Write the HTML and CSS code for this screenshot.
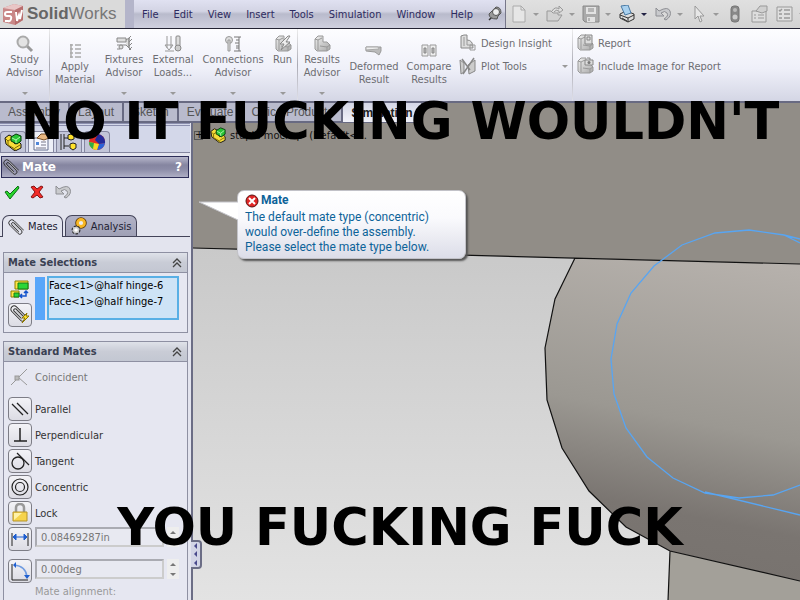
FILE: index.html
```html
<!DOCTYPE html>
<html lang="en">
<head>
<meta charset="utf-8">
<title>SolidWorks</title>
<link rel="stylesheet" href="styles.css">
</head>
<body>
<svg class="defs" aria-hidden="true">
  <defs>
    <linearGradient id="silver" x1="0" y1="0" x2="1" y2="1"><stop offset="0" stop-color="#eee"/><stop offset="1" stop-color="#aaa"/></linearGradient>
    <symbol id="part" viewBox="0 0 18 18">
      <path d="M1 5l4-3 4 2v4l2 3 4-2 2 2v4l-6 3-9-7z" fill="#f7dc3a" stroke="#111"/>
      <path d="M2 6l2 2v4l7 4v1M4 8l3-2M11 15l5-3" fill="none" stroke="#806a00"/>
      <path d="M7 4l5-3 5 2v5l-4 3-6-3z" fill="#28c435" stroke="#053d09"/>
      <path d="M8 5l4 2 4-3M12 7v3" fill="none" stroke="#b6f7b0"/>
    </symbol>
    <symbol id="clip" viewBox="0 0 18 18">
      <g transform="rotate(45 9 9)" fill="none" stroke="#2b2b2b">
        <path d="M18 5.500H2.500a3.500 3.500 0 000 7H16a2.500 2.500 0 000-5H4a1.500 1.500 0 000 3h11"/>
        <path d="M17 6.500H3M16 11.500H3M14 8.500H5" stroke="#aaa"/>
      </g>
    </symbol>
    <symbol id="block" viewBox="0 0 18 18">
      <path d="M2 4l3-3h5v6h4l3 3v4l-3 2H4l-2-2z" fill="url(#silver)" stroke="#999"/>
      <path d="M2 4l3 1v10M5 5l4-2M7 11l7 1v4M14 12l3-2" fill="none" stroke="#999"/>
    </symbol>
    <symbol id="undo" viewBox="0 0 18 16">
      <path d="M2 2v8h8L7 7q4-3 6 0t-3 6l2 1q6-4 4-9T5 5z" fill="#c9cacd" stroke="#8e8f94"/>
    </symbol>
    <symbol id="chev" viewBox="0 0 10 10">
      <path d="M1 5l4-4 4 4M1 9l4-4 4 4" fill="none" stroke="#444" stroke-width="1.3"/>
    </symbol>
  </defs>
</svg>

<header class="topbar">
  <div class="brand">
    <svg width="22" height="24" viewBox="0 0 22 24" aria-hidden="true">
      <path d="M1 6l11-4 9 2v14l-8 5L1 20z" fill="#c98787"/>
      <path d="M1 6l11-4 9 2-8 4z" fill="#e9c6c6"/>
      <path d="M13 8l8-4v14l-8 5z" fill="#b86d6d"/>
      <path d="M10 10H5q-2 0-2 2t2 2h2q3 0 2 3t-3 2H3M14 10l1 9 2-6 1 4 2-9" fill="none" stroke="#fff" stroke-width="2"/>
    </svg>
    <span class="brand-name"><b>Solid</b>Works</span>
  </div>
  <nav class="menu" aria-label="Main menu">
    <button>File</button><button>Edit</button><button>View</button><button>Insert</button><button>Tools</button><button>Simulation</button><button>Window</button><button>Help</button>
    <button class="pin" aria-label="Pin menu"><svg width="14" height="16" viewBox="0 0 14 16"><path d="M1 14l4-4" stroke="#333" stroke-width="1.5"/><path d="M1 8q0 5 8 5l1-3 3-3q0-6-5-6L5 4z" fill="#999" stroke="#555"/><circle cx="8" cy="6" r="3.500" fill="#eee" stroke="#555"/></svg></button>
  </nav>
  <div class="quick" role="toolbar" aria-label="Standard">
    <button aria-label="New"><svg width="18" height="18" viewBox="0 0 18 18"><path d="M3 1h8l4 4v12H3z" fill="#e6e6e6" stroke="#aaa"/><path d="M11 1v4h4" fill="none" stroke="#aaa"/></svg><i class="drop"></i></button>
    <button aria-label="Open"><svg width="18" height="18" viewBox="0 0 18 18"><path d="M1 16V6h4l2 2h5v2h4l-4 6z" fill="#d2d2d2" stroke="#999"/><path d="M6 6q3-5 7-2V1l4 4-4 3V6q-3-2-5 1" fill="#ddd" stroke="#999"/></svg><i class="drop"></i></button>
    <button aria-label="Save"><svg width="18" height="18" viewBox="0 0 18 18"><path d="M1 1h16v16H3l-2-2z" fill="#aaa" stroke="#888"/><path d="M4 2h10v7H4zM5 12h8v5H5z" fill="#e2e2e2"/><path d="M6 4h6M6 6h6M7 13v3" stroke="#888"/></svg><i class="drop"></i></button>
    <button aria-label="Print"><svg width="18" height="18" viewBox="0 0 18 18"><path d="M2 9l6-3 8 3v5l-6 3-8-4z" fill="#ddd" stroke="#333"/><path d="M3 1l7-1 3 8-6 2z" fill="#a9d1ef" stroke="#4b7ba5"/><path d="M2 10l8 3 6-3M10 13v4M4 13l5 3" fill="none" stroke="#333"/></svg><i class="drop dark"></i></button>
    <button aria-label="Undo"><svg width="18" height="18"><use href="#undo"/></svg><i class="drop"></i></button>
    <button aria-label="Select"><svg width="18" height="18" viewBox="0 0 18 18"><path d="M5 1v13l3-3 2 6 2-1-2-5h4z" fill="#e7e7e7" stroke="#999"/></svg><i class="drop"></i></button>
    <button aria-label="Rebuild"><svg width="18" height="18" viewBox="0 0 18 18"><rect x="5" y="1" width="8" height="16" rx="3" fill="#888" stroke="#777"/><circle cx="9" cy="5" r="2" fill="#bbb"/><circle cx="9" cy="12" r="2.500" fill="#ccc"/></svg></button>
    <button aria-label="File properties"><svg width="18" height="18" viewBox="0 0 18 18"><path d="M1 6h14v11H1z" fill="#ddd" stroke="#999"/><path d="M3 10h2m2 0h6M3 13h2m2 0h6" stroke="#999"/><path d="M5 6l4-5h7v5l-5 2z" fill="#d0d0d0" stroke="#999"/></svg></button>
    <button aria-label="Options"><svg width="18" height="18" viewBox="0 0 18 18"><path d="M1 2h15v14H1z" fill="#e0e0e0" stroke="#999"/><path d="M3 5l1 1 2-2M8 5h6M3 9h3M8 9h6M3 13h3M8 13h6" fill="none" stroke="#999" stroke-width="1.500"/></svg><i class="drop"></i></button>
  </div>
</header>

<section class="ribbon" aria-label="Simulation commands">
  <button class="cmd sep"><svg width="18" height="18" viewBox="0 0 18 18"><path d="M11 11l5 5" stroke="#999" stroke-width="3"/><circle cx="7" cy="7" r="5.500" fill="#e3e3e3" stroke="#aaa" stroke-width="2"/></svg><span>Study<br>Advisor</span><i class="drop"></i></button>
  <button class="cmd low"><svg width="18" height="18" viewBox="0 0 18 18"><path d="M5 2v14M4 3h3M4 7h3M4 11h3M4 15h3M9 3h6M9 7h6M9 11h6M9 15h6" stroke="#aaa" stroke-width="1.500"/></svg><span>Apply<br>Material</span></button>
  <button class="cmd"><svg width="18" height="18" viewBox="0 0 18 18"><path d="M2 3h9v4H2zM11 5l3-2v10l-3-3" fill="#ddd" stroke="#888"/><path d="M2 10h9M2 14h3M16 1l-2 2v10l2 2M17 4l-3 3M17 8l-3 3M17 12l-3 3" fill="none" stroke="#888"/><circle cx="6" cy="12" r="2" fill="#ddd" stroke="#888"/></svg><span>Fixtures<br>Advisor</span><i class="drop"></i></button>
  <button class="cmd"><svg width="18" height="18" viewBox="0 0 18 18"><path d="M3 1v12M7 1v12M1 10l4 5 4-5zM1 16h9" fill="none" stroke="#999"/><rect x="12" y="1" width="4" height="10" rx="1" fill="#ddd" stroke="#888"/><circle cx="14" cy="13" r="3" fill="#ccc" stroke="#888"/></svg><span>External<br>Loads...</span><i class="drop"></i></button>
  <button class="cmd"><svg width="18" height="18" viewBox="0 0 18 18"><circle cx="5" cy="5" r="3.500" fill="#ddd" stroke="#999"/><path d="M4 5v11h2V5z" fill="#ddd" stroke="#999"/><path d="M10 2h7M10 16h7M12 5h3M11 8h4M12 11h3M12 13h3M15 2v14" stroke="#777"/></svg><span>Connections<br>Advisor</span><i class="drop"></i></button>
  <button class="cmd sep"><svg width="18" height="18" viewBox="0 0 18 18"><use href="#block"/><path d="M14 1L6 9h4l-3 6 9-8h-4l4-6z" fill="#eee" stroke="#888"/></svg><span>Run</span><i class="drop"></i></button>
  <button class="cmd"><svg width="18" height="18"><use href="#block"/></svg><span>Results<br>Advisor</span><i class="drop"></i></button>
  <button class="cmd low"><svg width="18" height="18" viewBox="0 0 18 18"><path d="M1 5h15v4l-2 4-4-3-9-1z" fill="#bbb" stroke="#999"/><path d="M1 5h12l1 2-13 1z" fill="#eee" stroke="#aaa"/></svg><span>Deformed<br>Result</span></button>
  <button class="cmd low"><svg width="18" height="18" viewBox="0 0 18 18"><path d="M2 3h6v11H2zM10 3h6v11h-6z" fill="#eee" stroke="#999"/><path d="M4 6h2v5H4zM12 6h2v5h-2z" fill="#bbb" stroke="#888"/></svg><span>Compare<br>Results</span></button>
  <div class="stack sep">
    <button class="row-cmd"><svg width="18" height="18" viewBox="0 0 18 18"><path d="M2 2l3-1h3v5q6 0 6 8H2z" fill="#ddd" stroke="#888"/><path d="M5 3v9M8 6v5h5M11 11h5v5h-5z" fill="none" stroke="#999"/></svg><span>Design Insight</span></button>
    <button class="row-cmd"><svg width="18" height="18" viewBox="0 0 18 18"><path d="M1 3l4 3v9l-3 2zM9 8l7-5v11l-6 3z" fill="#ccc" stroke="#888"/><path d="M3 2l8 11M15 1L6 14l-2 3" fill="none" stroke="#888" stroke-width="1.500"/></svg><span>Plot Tools</span><i class="drop"></i></button>
  </div>
  <div class="stack">
    <button class="row-cmd"><svg width="18" height="18" viewBox="0 0 18 18"><use href="#block"/><path d="M9 1h7v9H9z" fill="#ddd" stroke="#888"/><path d="M11 3h3v3h-3z" fill="none" stroke="#888"/></svg><span>Report</span></button>
    <button class="row-cmd"><svg width="18" height="18" viewBox="0 0 18 18"><use href="#block"/><path d="M9 3h8v5H9zM11 1h3v2" fill="#ddd" stroke="#888"/><circle cx="13" cy="5.500" r="1.500" fill="#777"/></svg><span>Include Image for Report</span></button>
  </div>
</section>

<nav class="tabs" aria-label="Command tabs">
  <button>Assembly</button><button>Layout</button><button>Sketch</button><button>Evaluate</button><button>Office Products</button><button class="active">Simulation</button>
</nav>

<main class="work">
  <aside class="panel">
    <div class="panel-tabs">
      <button aria-label="Feature tree"><svg width="18" height="18"><use href="#part"/></svg></button>
      <button class="active" aria-label="Properties"><svg width="18" height="18" viewBox="0 0 18 18"><path d="M2 5h14v12H2z" fill="#f7f8ff" stroke="#66718f"/><path d="M4 9h3v3H4z" fill="#4f86d8"/><path d="M9 9h5M9 12h5M4 15h10" stroke="#778"/><path d="M5 5l4-4h5l3 4-5 2z" fill="#e8b782" stroke="#774d25"/></svg></button>
      <button aria-label="Configurations"><svg width="18" height="18" viewBox="0 0 18 18"><path d="M1 1v16M4 1v15M4 5h4M4 13h5" fill="none" stroke="#222"/><path d="M8 2l3-1 3 1v4l-3 1-3-1zM10 11l3-1 3 1v4l-3 2-3-2z" fill="#ffe22b" stroke="#222"/></svg></button>
      <button aria-label="Display"><svg width="18" height="18" viewBox="0 0 18 18"><circle cx="9" cy="9" r="8" fill="#e52b25"/><path d="M10 1a8 8 0 017 9l-6 1-4-4z" fill="#242a9a"/><path d="M17 10a8 8 0 01-8 7l2-6z" fill="#2b62d8"/><path d="M1 9l10 2-2 6a8 8 0 01-8-8z" fill="#f5d927"/><path d="M1 9a8 8 0 004 7l1-6z" fill="#30ad45"/></svg></button>
    </div>
    <h1 class="title"><svg width="16" height="18"><use href="#clip"/></svg><span>Mate</span><button aria-label="Help">?</button></h1>
    <div class="confirm">
      <button aria-label="OK"><svg width="16" height="16" viewBox="0 0 16 16"><path d="M1 8l2-1 3 3 8-8 1 2-9 11z" fill="#28d52c" stroke="#0c6c15"/></svg></button>
      <button aria-label="Cancel"><svg width="16" height="16" viewBox="0 0 16 16"><path d="M2 3l3-1 3 3 4-3 2 1-4 5 4 5-3 1-3-3-4 3-2-1 4-5z" fill="#f22b27" stroke="#851313"/></svg></button>
      <button aria-label="Undo"><svg width="18" height="16"><use href="#undo"/></svg></button>
    </div>
    <div class="mode-tabs">
      <button class="active"><svg width="16" height="18"><use href="#clip"/></svg>Mates</button>
      <button><svg width="16" height="18" viewBox="0 0 16 18"><circle cx="10" cy="6" r="3.500" fill="#fff" stroke="#5d3800" stroke-width="4.500"/><circle cx="10" cy="6" r="3.500" fill="#eee" stroke="#f9b824" stroke-width="2.800"/><circle cx="5" cy="13" r="3" fill="#fff" stroke="#333" stroke-width="3" stroke-dasharray="2 1"/><circle cx="5" cy="13" r="2.500" fill="#fff" stroke="#ccc" stroke-width="1.500"/></svg>Analysis</button>
    </div>
    <section class="group">
      <h2>Mate Selections<svg width="10" height="10"><use href="#chev"/></svg></h2>
      <div class="selections">
        <div class="sel-icons">
          <svg width="20" height="20" viewBox="0 0 20 20"><path d="M5 2h13v8H5z" fill="#ffe547" stroke="#8e7f00"/><path d="M8 4h10v6H8z" fill="#2bd638" stroke="#127a17"/><path d="M1 12h8v6H1z" fill="#ffe547" stroke="#8e7f00"/><path d="M4 14h5v4H4z" fill="#2bd638" stroke="#127a17"/><path d="M10 17h6v-4M12 15l-2 2 2 2M14 14l2-2 2 2" fill="none" stroke="#1454cc" stroke-width="1.500"/></svg>
          <button class="tool" aria-label="Multiple mate mode"><svg width="20" height="20" viewBox="0 0 20 20"><use href="#clip" width="17" height="17"/><path d="M17 8l-5 5h3l-3 5 7-7h-3z" fill="#ffe32c" stroke="#8c7600"/></svg></button>
        </div>
        <span class="swatch"></span>
        <ul class="faces"><li>Face&lt;1&gt;@half hinge-6</li><li>Face&lt;1&gt;@half hinge-7</li></ul>
      </div>
    </section>
    <section class="group">
      <h2>Standard Mates<svg width="10" height="10"><use href="#chev"/></svg></h2>
      <div class="mates">
        <button class="mate off"><span class="plain"><svg width="20" height="20" viewBox="0 0 20 20"><path d="M1 18L17 2M8 10l9 8" stroke="#999"/><rect x="5" y="9" width="4" height="4" fill="#bbb" stroke="#999"/></svg></span>Coincident</button>
        <button class="mate"><span class="tool"><svg width="20" height="20" viewBox="0 0 20 20"><path d="M2 5l11 11M7 4l11 11" stroke="#222" stroke-width="1.300"/></svg></span>Parallel</button>
        <button class="mate"><span class="tool"><svg width="20" height="20" viewBox="0 0 20 20"><path d="M10 3v13M4 16h13" stroke="#222" stroke-width="1.500"/></svg></span>Perpendicular</button>
        <button class="mate"><span class="tool"><svg width="20" height="20" viewBox="0 0 20 20"><circle cx="8" cy="12" r="6" fill="none" stroke="#222" stroke-width="1.300"/><path d="M7 2l12 12" stroke="#222" stroke-width="1.300"/></svg></span>Tangent</button>
        <button class="mate"><span class="tool"><svg width="20" height="20" viewBox="0 0 20 20"><circle cx="10" cy="10" r="8" fill="none" stroke="#222" stroke-width="1.200"/><circle cx="10" cy="10" r="4.500" fill="none" stroke="#222" stroke-width="1.200"/></svg></span>Concentric</button>
        <button class="mate"><span class="tool"><svg width="20" height="20" viewBox="0 0 20 20"><path d="M6 9V5q0-4 4-4t4 4v4" fill="none" stroke="#999" stroke-width="2.500"/><path d="M3 9h14v9H3z" fill="#f6d34c" stroke="#b69328"/><path d="M4 17V10h8z" fill="#fff2a8"/></svg></span>Lock</button>
        <div class="value"><button class="tool" aria-label="Distance mate"><svg width="20" height="20" viewBox="0 0 20 20"><path d="M2 4v13M18 4v13" stroke="#222"/><path d="M3 8h14M6 5L3 8l3 3zM14 5l3 3-3 3z" fill="#1f5fd0" stroke="#1f5fd0"/></svg></button><input aria-label="Distance" value="0.08469287in"><span class="spin"><i></i><i></i></span></div>
        <div class="value"><button class="tool" aria-label="Angle mate"><svg width="20" height="20" viewBox="0 0 20 20"><path d="M2 3v16h16" fill="none" stroke="#222"/><path d="M4 4q12 1 13 12" fill="none" stroke="#6f9be0" stroke-width="1.500"/><path d="M6 1L3 4l3 3zM14 14l3 4 3-4z" fill="#1f5fd0"/></svg></button><input aria-label="Angle" value="0.00deg"><span class="spin"><i></i><i></i></span></div>
        <p class="align">Mate alignment:</p>
      </div>
    </section>
    <button class="grip" aria-label="Collapse panel"><i></i><i></i><i></i></button>
  </aside>

  <section class="view" aria-label="Model view">
    <svg class="model" viewBox="193 122 607 478" preserveAspectRatio="xMinYMin slice" aria-hidden="true">
      <defs>
        <linearGradient id="sky" x1="0" y1="0" x2="0" y2="1"><stop offset="0" stop-color="#c9c9c9"/><stop offset="1" stop-color="#e3e3e3"/></linearGradient>
        <linearGradient id="cyl" gradientUnits="userSpaceOnUse" x1="735" y1="255" x2="675" y2="560"><stop offset="0" stop-color="#b6b1ac"/><stop offset=".55" stop-color="#9b9892"/><stop offset=".85" stop-color="#7a7571"/><stop offset="1" stop-color="#78736f"/></linearGradient>
      </defs>
      <path d="M193 122h607v142L193 247z" fill="#918d87"/>
      <path d="M193 247l607 16v337H193z" fill="url(#sky)"/>
      <path d="M670 550l130 30v20H668z" fill="#a3a099"/>
      <path d="M575 257l-20 41-10 49 2 52 15 48 27 43 37 36 44 24 130 30V263z" fill="url(#cyl)"/>
      <path d="M193 247l607 16M575 257l-20 41-10 49 2 52 15 48 27 43 37 36 44 24 130 30M670 550l-2 50" fill="none" stroke="#111" stroke-width="1.200"/>
      <path d="M800 238l-16-4-35-5-34 3-33 12-28 21-23 27-14 31-6 35 3 35 12 34 21 29 26 21 32 15 34 5 34-3 27-10M705 491l95 23M784 234l16 8" fill="none" stroke="#58a5f2" stroke-width="1.300"/>
    </svg>
    <div class="tree"><button aria-label="Expand">+</button><svg width="16" height="16"><use href="#part"/></svg><span>stupid mockup&nbsp; (Default&lt;...</span></div>
    <div class="balloon" role="alert">
      <svg class="tail" width="41" height="22" viewBox="0 0 41 22" aria-hidden="true"><path d="M40 1L1 1l39 18z" fill="#fff"/><path d="M40 1L1 1l39 18" fill="none" stroke="#c2c2c8"/></svg>
      <h3><svg width="14" height="14" viewBox="0 0 14 14" aria-hidden="true"><circle cx="7" cy="7" r="6" fill="#e02626" stroke="#5b1111"/><path d="M4 4l6 6M10 4l-6 6" stroke="#fff" stroke-width="2"/></svg>Mate</h3>
      <p>The default mate type (concentric)<br>would over-define the assembly.<br>Please select the mate type below.</p>
    </div>
  </section>
</main>

<p class="caption top">NO IT FUCKING WOULDN'T</p>
<p class="caption bottom">YOU FUCKING FUCK</p>
</body>
</html>
```
FILE: styles.css
```css
* { box-sizing: border-box; }

body {
  margin: 0;
  height: 100vh;
  display: flex;
  flex-direction: column;
  position: relative;
  overflow: hidden;
  background: #918d87;
  color: #333;
  font: 11px/13px "DejaVu Sans Condensed", "DejaVu Sans", sans-serif;
}

button {
  margin: 0;
  padding: 0;
  border: 0;
  background: none;
  color: inherit;
  font: inherit;
}

svg { display: block; flex: none; }
.defs { position: absolute; width: 0; height: 0; }

.drop {
  border: 3px solid transparent;
  border-top-color: #999;
  border-bottom: 0;
}
.drop.dark { border-top-color: #224; }

/* Title bar */
.topbar {
  display: flex;
  flex: none;
  height: 29px;
  border-bottom: 1px solid #223;
}
.brand {
  display: flex;
  align-items: center;
  gap: 3px;
  width: 125px;
  padding-left: 2px;
  background: #dadada;
}
.brand-name {
  color: #777;
  font: 17px/20px "Liberation Sans", sans-serif;
}
.brand-name b { color: #666; }
.menu {
  display: flex;
  align-items: center;
  gap: 15px;
  width: 381px;
  padding-left: 8px;
  border-left: 9px solid #b4b5ca;
  border-right: 1px solid #77778a;
  background: linear-gradient(#e0e1f1, #d3d4e4 40%, #b9bbcc 50%, #cfd0df);
  color: #2d2b60;
}
.quick {
  display: flex;
  flex: 1;
  align-items: center;
  gap: 7px;
  padding-left: 4px;
  overflow: hidden;
  background: linear-gradient(#e0e0e0, #d3d3d3);
}
.quick button {
  display: flex;
  flex: none;
  align-items: center;
  gap: 5px;
}

/* Ribbon */
.ribbon {
  display: grid;
  grid-template-columns: 50px 50px 48px 50px 70px 30px 48px 56px 54px 117px 1fr;
  flex: none;
  height: 74px;
  border-bottom: 2px solid #686a82;
  background: linear-gradient(#fdfdff, #eff0f9 55%, #d4d6e5);
  color: #6d6d72;
}
.sep {
  border-right: 1px solid;
  border-image: linear-gradient(#eee, #aaaab4 50%, #e2e2ea) 1;
}
.cmd {
  display: flex;
  flex-direction: column;
  align-items: center;
  padding: 6px 0;
  white-space: nowrap;
}
.cmd.low { padding-top: 13px; }
.cmd .drop { margin-top: auto; }
.stack {
  display: flex;
  flex-direction: column;
  gap: 5px;
  padding: 5px 4px 5px 3px;
}
.row-cmd {
  display: flex;
  align-items: center;
  gap: 4px;
  height: 18px;
  white-space: nowrap;
}
.row-cmd .drop { margin-left: auto; }

/* Command tabs */
.tabs {
  display: flex;
  flex: none;
  height: 20px;
}
.tabs button {
  padding: 0 8px;
  border-right: 2px solid #686a82;
  border-bottom: 2px solid #686a82;
  background: #b9bbcd;
  color: #555;
  font: 12px/16px "Liberation Sans", sans-serif;
}
.tabs .active {
  border-bottom-width: 1px;
  background: linear-gradient(#d4d6e5, #f2f3fa);
  color: #222;
  font-weight: bold;
}

.work {
  display: flex;
  flex: 1;
  min-height: 0;
}

/* Property panel */
.panel {
  position: relative;
  flex: none;
  width: 193px;
  padding-right: 1px;
  border-right: 2px solid #6b6d85;
  background: #e3e4ee;
}
.panel-tabs {
  display: flex;
  align-items: flex-end;
  gap: 2px;
  height: 30px;
  border-top: 3px double #8c8fae;
  border-bottom: 1px solid #8587a0;
  background: #d3d7e9;
}
.panel-tabs button {
  width: 26px;
  height: 21px;
  padding: 1px 3px;
  border: 1px solid #8587a0;
  border-bottom: 0;
  border-radius: 4px 4px 0 0;
  background: #c2c5d8;
}
.panel-tabs .active { background: #eef0f8; }
.title {
  display: flex;
  align-items: center;
  gap: 3px;
  height: 22px;
  margin: 3px 1px 0;
  padding: 0 6px 0 1px;
  border: 1px solid #2d2d58;
  background: linear-gradient(#b7b7cb, #8585a0 40%, #8b8ba6 60%, #aeaec4);
  color: #fff;
  font: bold 12px/18px "DejaVu Sans", sans-serif;
}
.title button { margin-left: auto; }
.confirm {
  display: flex;
  gap: 9px;
  padding: 6px 4px;
}
.mode-tabs {
  display: flex;
  gap: 2px;
  height: 27px;
  padding: 5px 2px 0;
  margin-top: 4px;
  border-bottom: 1px solid #444459;
  color: #223;
}
.mode-tabs button {
  display: flex;
  align-items: center;
  gap: 4px;
  padding: 0 4px 0 5px;
  border: 1px solid #444459;
  border-bottom: 0;
  border-radius: 7px 7px 0 0;
  background: linear-gradient(#b2b3c7, #9fa0b5);
}
.mode-tabs .active { background: #e3e4ee; margin-bottom: -1px; }
.group {
  margin: 8px 2px 0 3px;
  border: 1px solid #8e90a2;
  background: #e6e7f1;
}
.mode-tabs + .group { margin-top: 15px; }
.group h2 {
  display: flex;
  align-items: center;
  justify-content: space-between;
  height: 20px;
  margin: 0;
  padding: 0 5px 0 4px;
  border-bottom: 1px solid #8e90a2;
  background: linear-gradient(#dfe2e9, #c9ccd6 50%, #c3c7d2);
  color: #3a4152;
  font-size: 11px;
  line-height: 18px;
}
.selections {
  display: flex;
  padding: 3px 8px 5px 4px;
}
.sel-icons {
  display: flex;
  flex-direction: column;
  align-items: center;
  gap: 4px;
  margin-top: 3px;
}
.tool {
  display: grid;
  flex: none;
  place-items: center;
  width: 24px;
  height: 24px;
  border: 1px solid #7d7d86;
  border-radius: 4px;
  background: linear-gradient(#f3f3f7, #dcdce4);
}
.plain {
  display: grid;
  place-items: center;
  width: 24px;
  height: 24px;
}
.swatch {
  width: 10px;
  height: 43px;
  margin: 1px 2px 0 3px;
  background: #58a6fa;
}
.faces {
  flex: 1;
  height: 44px;
  margin: 0;
  padding: 0;
  border: 2px solid #58afe5;
  background: #cee3f6;
  color: #000;
  line-height: 16px;
  list-style: none;
  white-space: nowrap;
}
.mates {
  display: flex;
  flex-direction: column;
  gap: 2px;
  padding: 3px 8px 4px 4px;
}
.mate {
  display: flex;
  align-items: center;
  gap: 3px;
  height: 24px;
}
.mate.off { margin-bottom: 6px; color: #777; }
.value {
  display: flex;
  gap: 3px;
}
.value + .value { margin-top: 6px; }
.value input {
  flex: 1;
  min-width: 0;
  height: 20px;
  margin: 0;
  padding: 0 4px;
  border: 2px solid #aaabb2;
  border-right-color: #ccc;
  border-bottom-color: #ccc;
  background: #e8e9f1;
  color: #777;
  font: inherit;
}
.spin {
  display: flex;
  flex-direction: column;
  align-items: center;
  justify-content: space-around;
  width: 12px;
  height: 20px;
  background: #eee;
}
.spin i {
  border: 3px solid transparent;
  border-top: 0;
  border-bottom-color: #777;
}
.spin i + i {
  border-top: 3px solid #777;
  border-bottom: 0;
}
.align {
  margin: 0 0 0 27px;
  color: #999;
}
.grip {
  position: absolute;
  z-index: 1;
  right: -11px;
  bottom: 31px;
  display: flex;
  flex-direction: column;
  align-items: center;
  justify-content: space-around;
  width: 11px;
  height: 29px;
  border: 2px solid #6b6d85;
  border-left: 0;
  border-radius: 0 4px 4px 0;
  background: #d3d5e6;
}
.grip i {
  border: 3px solid transparent;
  border-right-color: #4a4a8c;
  border-left: 0;
}

/* Model view */
.view {
  position: relative;
  flex: 1;
  overflow: hidden;
}
.model {
  position: absolute;
  width: 100%;
  height: 100%;
}
.tree {
  position: relative;
  display: flex;
  align-items: center;
  padding: 4px 0 0 1px;
  color: #111;
}
.tree button {
  width: 9px;
  height: 9px;
  margin-right: 7px;
  border: 1px solid #555;
  line-height: 6px;
}
.tree span { margin-left: 4px; }
.balloon {
  position: absolute;
  left: 44px;
  top: 67px;
  padding: 2px 36px 3px 7px;
  border: 1px solid #c2c2c8;
  border-radius: 7px;
  background: linear-gradient(#fff, #fafafd 40%, #dcdde8);
  box-shadow: 2px 2px 2px #555;
  color: #0d6399;
  font: 12px/15px Roboto, "Open Sans", sans-serif;
}
.balloon h3 {
  display: flex;
  align-items: center;
  gap: 2px;
  margin: 0;
  font-size: 12px;
}
.balloon p { margin: 2px 0 0; white-space: nowrap; }
.tail {
  position: absolute;
  left: -40px;
  top: 10px;
}

/* Overlaid captions */
.caption {
  position: absolute;
  left: 0;
  right: 0;
  margin: 0;
  color: #000;
  font: bold 51px/58px "DejaVu Sans", sans-serif;
  text-align: center;
  white-space: nowrap;
  pointer-events: none;
}
.caption.top { top: 93px; }
.caption.bottom { bottom: 43px; }
```
